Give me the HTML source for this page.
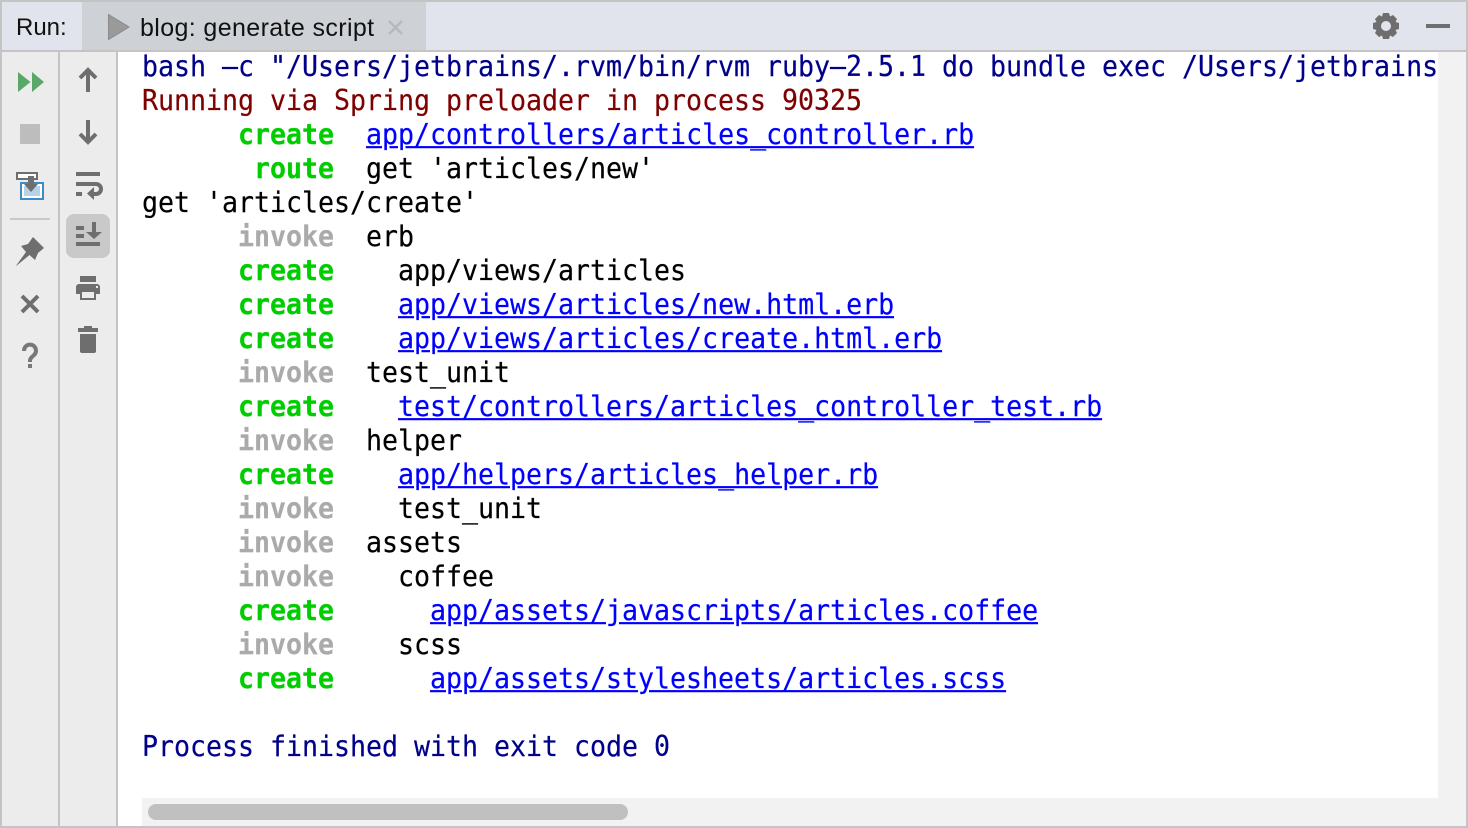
<!DOCTYPE html>
<html><head><meta charset="utf-8"><style>
html,body{margin:0;padding:0;width:1468px;height:828px;overflow:hidden;background:#fff}
.a{position:absolute}
#t{position:absolute;left:142px;top:51px;font:26.6px/34px "DejaVu Sans Mono","Liberation Mono",monospace;white-space:pre;color:#000;letter-spacing:-.01px;-webkit-text-stroke:.2px}
#t div{height:34px;transform:scaleY(1.08);transform-origin:0 26px}
.b{color:#00008b}.r{color:#7f0000}.g{color:#00cd00;font-weight:bold}.i{color:#aaa;font-weight:bold}
.l{color:#0000ff;text-decoration:underline}
</style></head><body>
<div class="a" style="left:0;top:0;width:1468px;height:2px;background:#c4c4c4"></div>
<div class="a" style="left:0;top:2px;width:1468px;height:48px;background:#e1e4ec"></div>
<div class="a" style="left:82px;top:2px;width:344px;height:48px;background:#ced1d6"></div>
<div class="a" style="left:0;top:50px;width:1468px;height:2px;background:#c4c4c4"></div>
<div class="a" style="left:2px;top:52px;width:56px;height:774px;background:#ececec"></div>
<div class="a" style="left:58px;top:52px;width:2px;height:774px;background:#c4c4c4"></div>
<div class="a" style="left:60px;top:52px;width:56px;height:774px;background:#ececec"></div>
<div class="a" style="left:116px;top:52px;width:2px;height:774px;background:#c4c4c4"></div>
<div class="a" style="left:1438px;top:52px;width:28px;height:774px;background:#f2f2f2"></div>
<div class="a" style="left:142px;top:798px;width:1296px;height:28px;background:#f2f2f2"></div>
<div class="a" style="left:148px;top:804px;width:480px;height:16px;border-radius:8px;background:#c0c0c0"></div>
<div class="a" style="left:0;top:0;width:2px;height:828px;background:#c4c4c4"></div>
<div class="a" style="left:1466px;top:0;width:2px;height:828px;background:#c4c4c4"></div>
<div class="a" style="left:0;top:826px;width:1468px;height:2px;background:#c4c4c4"></div>
<div class="a" style="left:16px;top:13px;font:24px/30px 'Liberation Sans',sans-serif;color:#111">Run:</div>
<div class="a" style="left:140px;top:13px;font:25px/30px 'Liberation Sans',sans-serif;color:#111;white-space:pre;letter-spacing:.38px">blog: generate script</div>
<div class="a" style="left:66px;top:214px;width:44px;height:44px;border-radius:8px;background:#c9c9c9"></div>
<svg class="a" style="left:0;top:0" width="1468" height="828" viewBox="0 0 1468 828" fill="none">
<polygon points="108.500,14.500 129,27 108.500,39.500" fill="#9a9a9a" stroke="#8a8a8a" stroke-width="1"/>
<path d="M389 21l13 13M402 21l-13 13" stroke="#b5b8bd" stroke-width="2.400"/>
<path d="M1383 13h6l1 3.500 3-1.500 4 4-1.500 3 3.500 1v6l-3.500 1 1.500 3-4 4-3-1.500-1 3.500h-6l-1-3.500-3 1.500-4-4 1.500-3-3.500-1v-6l3.500-1-1.500-3 4-4 3 1.500z" fill="#6e6e6e"/>
<circle cx="1386" cy="26" r="5" fill="#e1e4ec"/>
<rect x="1426" y="24" width="24" height="4" fill="#6e6e6e"/>
<path d="M18 72l12.500 10-12.500 10zM32 72l12 10-12 10z" fill="#59a869"/>
<rect x="20" y="124" width="20" height="20" fill="#bdbdbd"/>
<rect x="21" y="183" width="22" height="16" fill="#fff" stroke="#3d8cc4" stroke-width="2"/>
<rect x="24" y="186" width="16" height="10" fill="#b5d2e6"/>
<rect x="17" y="173" width="20" height="6" fill="#fff" stroke="#6e6e6e" stroke-width="2"/>
<path d="M28 176h6v8h4l-7 8-7-8h4z" fill="#6e6e6e"/>
<rect x="10" y="218" width="40" height="2" fill="#c9c9c9"/>
<path d="M15.500 266.500L26 252 21 246 28 244 33 237 44 248 38 253 35 260 29.500 255z" fill="#6e6e6e"/>
<path d="M22 296l16 16M38 296l-16 16" stroke="#6e6e6e" stroke-width="4"/>
<path d="M24 351c0-8.500 12-8.500 12 0 0 5-6 5-6 10v1" stroke="#787878" stroke-width="4"/>
<rect x="28" y="364" width="4" height="4" fill="#787878"/>
<path d="M88 70v22M80 78l8-8 8 8M88 120v22M80 134l8 8 8-8" stroke="#6e6e6e" stroke-width="4"/>
<path d="M76 172h24v4H76zM76 192h6v4h-6z" fill="#6e6e6e"/>
<path d="M76 184h20a5 5 0 0 1 0 10h-6" stroke="#6e6e6e" stroke-width="4"/>
<path d="M87 193.500l7-6.500v13z" fill="#6e6e6e"/>
<path d="M76 226h8v4h-8zM76 234h8v4h-8zM76 242h24v4H76zM92 222h4v10h6l-8 7-8-7h6z" fill="#6e6e6e"/>
<path d="M80 276h16v6H80zM79 284h18a3 3 0 0 1 3 3v7h-4v6H80v-6h-4v-7a3 3 0 0 1 3-3z" fill="#6e6e6e"/>
<rect x="82" y="292" width="12" height="6" fill="#ececec"/>
<rect x="96" y="286" width="2" height="2" fill="#ececec"/>
<path d="M78 328h6v-2h8v2h6v4H78zM80 334h16v17a2 2 0 0 1-2 2H82a2 2 0 0 1-2-2z" fill="#6e6e6e"/>
</svg>
<div id="t"><div class="b">bash –c "/Users/jetbrains/.rvm/bin/rvm ruby–2.5.1 do bundle exec /Users/jetbrains</div><div class="r">Running via Spring preloader in process 90325</div><div>      <span class="g">create</span>  <span class="l">app/controllers/articles_controller.rb</span></div><div>       <span class="g">route</span>  get 'articles/new'</div><div>get 'articles/create'</div><div>      <span class="i">invoke</span>  erb</div><div>      <span class="g">create</span>    app/views/articles</div><div>      <span class="g">create</span>    <span class="l">app/views/articles/new.html.erb</span></div><div>      <span class="g">create</span>    <span class="l">app/views/articles/create.html.erb</span></div><div>      <span class="i">invoke</span>  test_unit</div><div>      <span class="g">create</span>    <span class="l">test/controllers/articles_controller_test.rb</span></div><div>      <span class="i">invoke</span>  helper</div><div>      <span class="g">create</span>    <span class="l">app/helpers/articles_helper.rb</span></div><div>      <span class="i">invoke</span>    test_unit</div><div>      <span class="i">invoke</span>  assets</div><div>      <span class="i">invoke</span>    coffee</div><div>      <span class="g">create</span>      <span class="l">app/assets/javascripts/articles.coffee</span></div><div>      <span class="i">invoke</span>    scss</div><div>      <span class="g">create</span>      <span class="l">app/assets/stylesheets/articles.scss</span></div><div> </div><div class="b">Process finished with exit code 0</div></div>
</body></html>
